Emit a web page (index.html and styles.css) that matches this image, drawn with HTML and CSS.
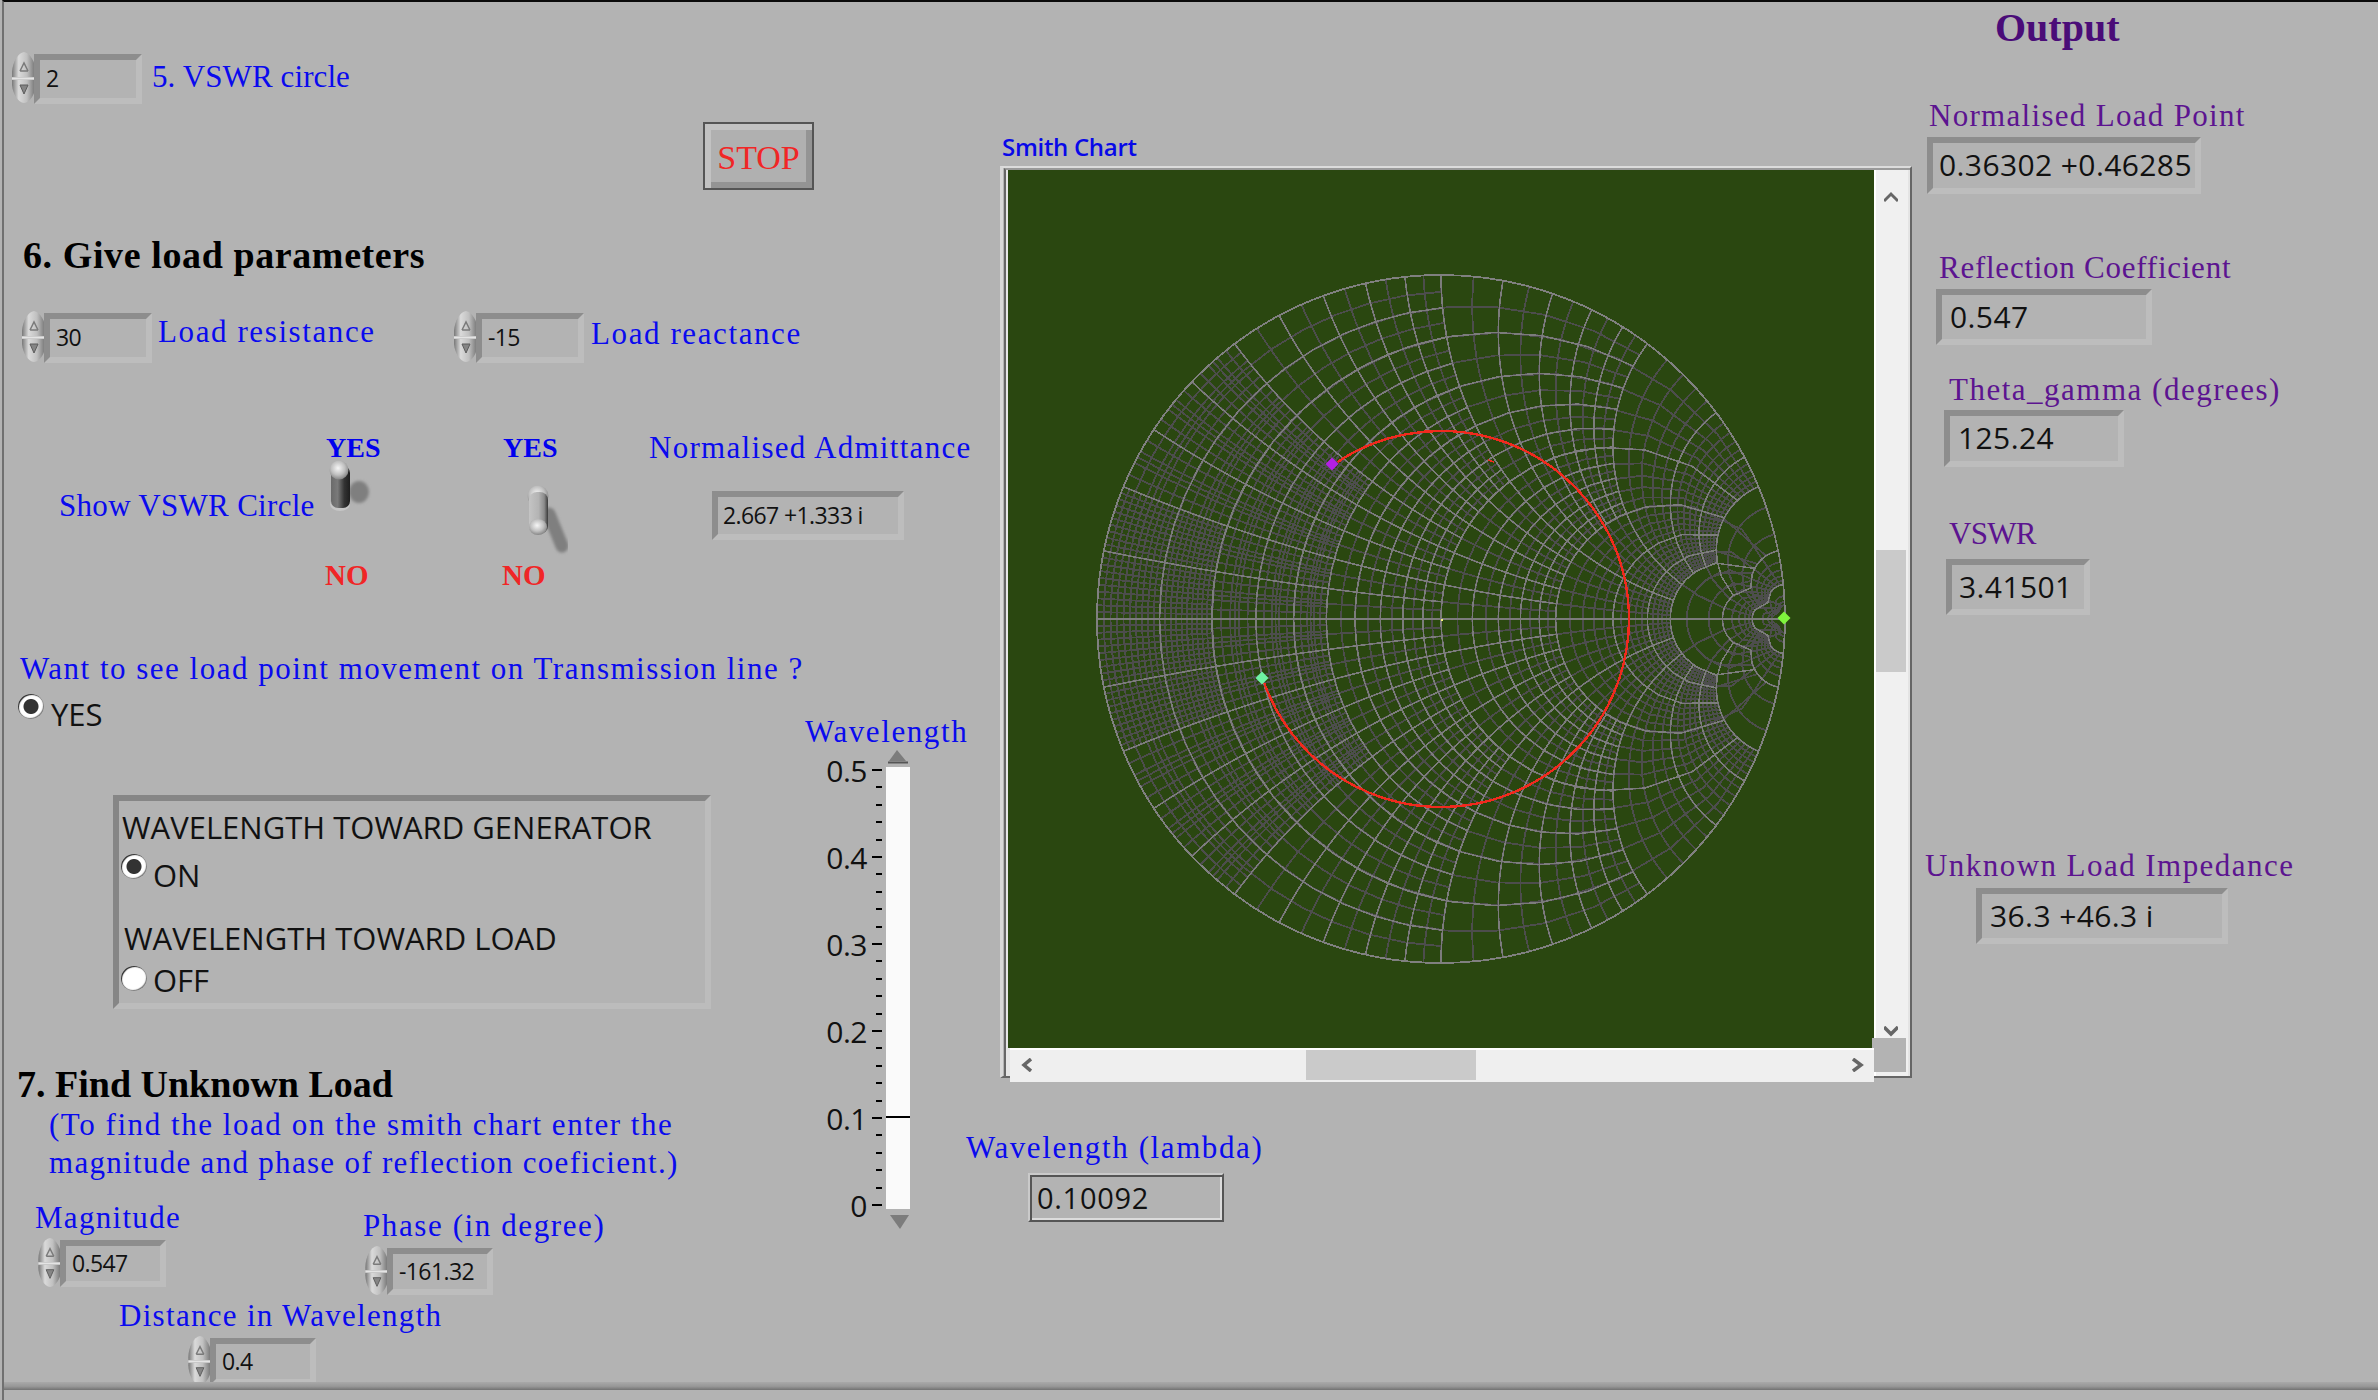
FILE: index.html
```html
<!DOCTYPE html>
<html lang="en">
<head>
<meta charset="utf-8">
<title>Smith Chart</title>
<link rel="stylesheet" href="styles.css">
</head>
<body>
<svg class="defs" width="0" height="0" aria-hidden="true">
  <defs>
    <linearGradient id="spinFill" x1="0" x2="1" y1="0" y2="0">
      <stop offset="0" stop-color="#777"/><stop offset=".28" stop-color="#dadada"/><stop offset=".62" stop-color="#c0c0c0"/><stop offset="1" stop-color="#6c6c6c"/>
    </linearGradient>
    <linearGradient id="leverDark" x1="0" x2="1" y1="0" y2="0">
      <stop offset="0" stop-color="#6a6a6a"/><stop offset=".35" stop-color="#7a7a7a"/><stop offset=".7" stop-color="#333"/><stop offset="1" stop-color="#1e1e1e"/>
    </linearGradient>
    <linearGradient id="leverLight" x1="0" x2="1" y1="0" y2="0">
      <stop offset="0" stop-color="#c4c4c4"/><stop offset=".5" stop-color="#b4b4b4"/><stop offset=".8" stop-color="#8c8c8c"/><stop offset="1" stop-color="#3a3a3a"/>
    </linearGradient>
    <radialGradient id="ball" cx=".45" cy=".4" r=".6">
      <stop offset="0" stop-color="#f6f6f6"/><stop offset=".6" stop-color="#c0c0c0"/><stop offset="1" stop-color="#868686"/>
    </radialGradient>
    <filter id="soft" x="-40%" y="-40%" width="180%" height="180%"><feGaussianBlur stdDeviation="1.5"/></filter>
    <symbol id="spin" viewBox="0 0 24 51">
      <path d="M0 25C-1 13 5 1 12 0c7 1 13 13 12 25Z" fill="url(#spinFill)"/>
      <path d="M0 28c-1 11 5 22 12 23 7-1 13-12 12-23Z" fill="url(#spinFill)"/>
      <path d="M0 26.500h24" stroke="#e4e4e4" stroke-width="2"/>
      <path d="M8 19l4-8 4 8M8 19h8" fill="none" stroke="#7a7a7a" stroke-width="1.500"/>
      <path d="M8 33h8l-4 9Z" fill="#858585" stroke="#5c5c5c"/>
    </symbol>
  </defs>
</svg>

<main class="panel">
  <section class="col-left">
    <div class="row vswr-row">
      <div class="num"><svg class="spin"><use href="#spin"/></svg><output class="field w108">2</output></div>
      <span class="lbl vswr-lbl">5. VSWR circle</span>
    </div>

    <button class="stop" type="button">STOP</button>

    <h2 class="head head-six">6. Give load parameters</h2>

    <div class="load-row">
      <div class="row">
        <div class="num"><svg class="spin"><use href="#spin"/></svg><output class="field w108">30</output></div>
        <span class="lbl res-lbl">Load resistance</span>
      </div>
      <div class="row">
        <div class="num"><svg class="spin"><use href="#spin"/></svg><output class="field w108">-15</output></div>
        <span class="lbl rea-lbl">Load reactance</span>
      </div>
    </div>

    <div class="toggle-row">
      <div class="show-cell"><span class="lbl show-lbl">Show VSWR Circle</span></div>
      <div class="toggle-cell">
        <span class="yes">YES</span>
        <svg class="toggle" viewBox="0 0 70 102" width="70" height="102">
          <ellipse cx="34" cy="36" rx="10" ry="11" fill="#7f7f7f" filter="url(#soft)"/>
          <ellipse cx="15" cy="48" rx="10" ry="7" fill="#c6c6c6"/>
          <rect x="6" y="10" width="19" height="42" rx="7" fill="url(#leverDark)"/>
          <circle cx="14" cy="14" r="9.500" fill="url(#ball)"/>
        </svg>
        <span class="no">NO</span>
      </div>
      <div class="toggle-cell">
        <span class="yes">YES</span>
        <svg class="toggle" viewBox="0 0 70 102" width="70" height="102">
          <path d="M47 58L60 90" stroke="#7f7f7f" stroke-width="13" stroke-linecap="round" filter="url(#soft)"/>
          <circle cx="36" cy="40" r="10.500" fill="url(#ball)"/>
          <rect x="27" y="36" width="19" height="42" rx="8" fill="url(#leverLight)"/>
          <ellipse cx="36" cy="71" rx="9" ry="8" fill="url(#ball)"/>
        </svg>
        <span class="no">NO</span>
      </div>
      <div class="admit-cell">
        <span class="lbl admit-lbl">Normalised Admittance</span>
        <output class="field admit">2.667 +1.333 i</output>
      </div>
    </div>

    <p class="lbl want">Want to see load point movement on Transmission line ?</p>

    <div class="lower">
      <div class="lower-main">
        <div class="row radio-yes">
          <span class="radio on"></span><span class="opt opt-yes">YES</span>
        </div>

        <div class="wave-box">
          <div class="opt box-gen">WAVELENGTH TOWARD GENERATOR</div>
          <div class="row radio-on"><span class="radio on"></span><span class="opt opt-on">ON</span></div>
          <div class="opt box-load">WAVELENGTH TOWARD LOAD</div>
          <div class="row radio-off"><span class="radio"></span><span class="opt opt-off">OFF</span></div>
        </div>

        <h2 class="head head-seven">7. Find Unknown Load</h2>
        <p class="lbl note"><span class="note-a">(To find the load on the smith chart enter the</span><br><span class="note-b">magnitude and phase of reflection coeficient.)</span></p>

        <div class="mag-row">
          <div>
            <div class="lbl tight">Magnitude</div>
            <div class="num small mag-num"><svg class="spin"><use href="#spin"/></svg><output class="field w106">0.547</output></div>
          </div>
          <div class="phase-cell">
            <div class="lbl">Phase (in degree)</div>
            <div class="num small phase-num"><svg class="spin"><use href="#spin"/></svg><output class="field w106">-161.32</output></div>
          </div>
        </div>

        <div class="lbl tight dist-lbl">Distance in Wavelength</div>
        <div class="num small dist-num"><svg class="spin"><use href="#spin"/></svg><output class="field w106">0.4</output></div>
      </div>

      <div class="slider-col">
        <div class="lbl slider-lbl">Wavelength</div>
        <div class="slider">
          <div class="scale">
            <div class="mark"><span>0.5</span><b></b></div>
            <div class="mark"><span>0.4</span><b></b></div>
            <div class="mark"><span>0.3</span><b></b></div>
            <div class="mark"><span>0.2</span><b></b></div>
            <div class="mark"><span>0.1</span><b></b></div>
            <div class="mark"><span>0</span><b></b></div>
          </div>
          <div class="minor"></div>
          <div class="track-col">
            <svg class="arrow-up" width="24" height="17" viewBox="0 0 24 17"><path d="M11 0L20 11H3Z" fill="#7c7c7c"/><path d="M2 12.500h20" stroke="#555" stroke-width="2"/></svg>
            <div class="track"><i class="needle" style="bottom:20.500%"></i></div>
            <svg class="arrow-down" width="24" height="20" viewBox="0 0 24 20"><path d="M4 6H23L14 20Z" fill="#7c7c7c"/></svg>
          </div>
        </div>
      </div>
    </div>
  </section>

  <section class="col-chart">
    <div class="chart-title">Smith Chart</div>
    <div class="frame">
      <div class="frame-in">
        <svg id="smith" class="plot" width="866" height="878" viewBox="0 0 866 878" role="img" aria-label="Smith chart"></svg>
        <div class="vbar">
          <svg class="sb-up" width="14" height="14" viewBox="0 0 14 14"><path d="M0 10L7 3l7 7" fill="none" stroke="#666" stroke-width="3"/></svg>
          <div class="vthumb"></div>
          <svg class="sb-down" width="14" height="12" viewBox="0 0 14 12"><path d="M0 1l7 7 7-7" fill="none" stroke="#666" stroke-width="3.500"/></svg>
          <div class="corner"></div>
        </div>
        <div class="hbar">
          <svg class="sb-left" width="11" height="14" viewBox="0 0 11 14"><path d="M10 1L3 7l7 6" fill="none" stroke="#666" stroke-width="3.500"/></svg>
          <div class="hthumb"></div>
          <svg class="sb-right" width="12" height="14" viewBox="0 0 12 14"><path d="M1 1l8 6-8 6" fill="none" stroke="#666" stroke-width="3.500"/></svg>
        </div>
      </div>
    </div>
    <div class="lbl lambda-lbl">Wavelength (lambda)</div>
    <output class="lambda">0.10092</output>
  </section>

  <section class="col-out">
    <h1 class="out-title">Output</h1>
    <div class="plbl p-nlp">Normalised Load Point</div>
    <output class="ofield o-nlp">0.36302 +0.46285</output>
    <div class="plbl p-ref">Reflection Coefficient</div>
    <output class="ofield o-ref">0.547</output>
    <div class="plbl p-theta">Theta_gamma (degrees)</div>
    <output class="ofield o-theta">125.24</output>
    <div class="plbl p-vswr">VSWR</div>
    <output class="ofield o-vswr">3.41501</output>
    <div class="plbl p-unk">Unknown Load Impedance</div>
    <output class="ofield o-unk">36.3 +46.3 i</output>
  </section>

  <div class="bottom-line"></div>
</main>
<script src="app.js"></script>
</body>
</html>
```
FILE: styles.css
```css
html, body { margin: 0; padding: 0; background: #b3b3b3; overflow: hidden; }
body { width: 2378px; height: 1400px; }
.defs { position: absolute; }

.panel {
  box-sizing: border-box;
  margin-left: 2px;
  width: 2376px;
  height: 1400px;
  border-top: 2px solid #0a0a0a;
  border-left: 2px solid #707070;
  background: #b3b3b3;
  display: grid;
  grid-template-columns: 956px 952px 466px;
  grid-template-rows: 1380px 8px;
}
.bottom-line { grid-column: 1 / -1; background: linear-gradient(#a9a9a9, #979797 55%, #727272); }
.col-left, .col-chart, .col-out { min-width: 0; }

.row { display: flex; align-items: flex-start; }

.lbl {
  display: block;
  margin: 0;
  font: 31px/36px "Liberation Serif", serif;
  letter-spacing: 1.600px;
  color: #0a0aee;
  white-space: nowrap;
}
.tight { letter-spacing: 1.300px; }
.head {
  margin: 0;
  font: bold 38px/44px "Liberation Serif", serif;
  color: #000;
  white-space: nowrap;
}
.opt {
  font: 31px/34px "Open Sans", sans-serif;
  color: #111;
  white-space: nowrap;
}

/* numeric controls */
.num { display: flex; align-items: flex-start; }
.spin { width: 24px; height: 51px; flex: none; }
.field {
  box-sizing: border-box;
  display: flex;
  align-items: center;
  height: 50px;
  margin: 2px 0 0 -2px;
  padding: 0 0 2px 6px;
  border: 6px solid;
  border-color: #8d8d8d #bdbdbd #bdbdbd #8d8d8d;
  font: 23px "Open Sans", sans-serif;
  letter-spacing: -.600px;
  color: #111;
  white-space: nowrap;
}
.w108 { width: 108px; }
.w106 { width: 106px; }
.small .spin { height: 49px; }
.small .field { height: 47px; }

/* section 5 */
.vswr-row { margin: 50px 0 0 8px; }
.vswr-lbl { margin: 7px 0 0 10px; letter-spacing: .100px; }

.stop {
  display: block;
  box-sizing: border-box;
  width: 111px;
  height: 68px;
  margin: 18px 0 0 699px;
  padding: 4px 0 0;
  border: 2px solid #555;
  background: #b0b0b0;
  box-shadow: inset 7px 7px 0 -1px #c2c2c2, inset -7px -7px 0 -1px #949494;
  font: 34px "Liberation Serif", serif;
  color: #f02626;
}

/* section 6 */
.head-six { margin: 43px 0 0 19px; letter-spacing: .600px; }
.load-row {
  display: grid;
  grid-template-columns: 432px auto;
  justify-content: start;
  margin: 34px 0 0 18px;
}
.res-lbl { margin: 3px 0 0 6px; }
.rea-lbl { margin: 5px 0 0 7px; }

.toggle-row {
  display: grid;
  grid-template-columns: 321px 177px 147px auto;
  justify-content: start;
  margin-top: 68px;
}
.show-cell { padding: 57px 0 0 55px; }
.show-lbl { letter-spacing: .300px; }
.toggle-cell { display: flex; flex-direction: column; align-items: flex-start; }
.yes, .no { font: bold 29px/34px "Liberation Serif", serif; white-space: nowrap; }
.yes { color: #0000ee; font-size: 28px; margin-left: 1px; }
.no { color: #f02626; }
.toggle { display: block; margin-top: -9px; }
.admit-cell { margin-top: -1px; }
.admit-lbl { letter-spacing: 1.300px; }
.admit { width: 192px; height: 49px; margin: 25px 0 0 63px; padding-left: 5px; }

.want { margin: 59px 0 0 16px; letter-spacing: 1.500px; }

.lower { display: grid; grid-template-columns: 801px auto; }

/* radios */
.radio {
  box-sizing: border-box;
  flex: none;
  width: 26px;
  height: 25px;
  border-radius: 50%;
  background: #fff;
  box-shadow: inset 1px 1px 1px #222, inset -1px -1px 1px #777;
}
.radio.on { background: radial-gradient(circle, #333 0 7px, #fff 8px); }
.radio-yes { margin: 7px 0 0 14px; }
.opt-yes { margin: 3px 0 0 7px; }

.wave-box {
  box-sizing: border-box;
  width: 598px;
  height: 214px;
  margin: 64px 0 0 109px;
  border: 6px solid;
  border-color: #868686 #bcbcbc #bcbcbc #868686;
}
.box-gen { margin: 9px 0 0 3px; }
.radio-on { margin: 10px 0 0 2px; }
.opt-on { margin: 4px 0 0 6px; }
.box-load { margin: 29px 0 0 5px; }
.radio-off { margin: 11px 0 0 2px; }
.opt-off { margin: -3px 0 0 6px; }

/* section 7 */
.head-seven { margin: 53px 0 0 13px; }
.note { margin: 0 0 0 45px; line-height: 38px; }
.note-a { letter-spacing: 1.550px; }
.note-b { letter-spacing: 1.300px; }
.mag-row {
  display: grid;
  grid-template-columns: 328px auto;
  justify-content: start;
  margin: 18px 0 0 31px;
}
.phase-cell { padding-top: 8px; }
.mag-num { margin: 2px 0 0 3px; }
.phase-num { margin: 2px 0 0 2px; }
.dist-lbl { margin: 3px 0 0 115px; }
.dist-num { margin: 2px 0 0 184px; }

/* slider */
.slider-lbl { margin-top: 27px; }
.slider {
  display: grid;
  grid-template-columns: 71px 6px 28px;
}
.scale {
  display: flex;
  flex-direction: column;
  justify-content: space-between;
  height: 437px;
  margin-top: 19px;
}
.mark { display: flex; justify-content: flex-end; align-items: center; gap: 5px; height: 2px; }
.mark span { font: 30px "Open Sans", sans-serif; letter-spacing: -.500px; color: #111; }
.mark b { width: 4px; height: 2px; background: #000; }
.minor {
  height: 437px;
  margin-top: 19px;
  background: repeating-linear-gradient(to bottom, #000 0 2px, transparent 2px 17.400px);
}
.track-col { display: flex; flex-direction: column; margin-left: 4px; }
.track { position: relative; width: 24px; height: 442px; background: #fafafa; flex: none; }
.needle { position: absolute; left: 0; right: 0; height: 2px; background: #000; }

/* chart */
.chart-title {
  margin: 131px 0 0 42px;
  font: 600 24px/28px "Open Sans", sans-serif;
  letter-spacing: -.300px;
  color: #0808e8;
  white-space: nowrap;
}
.frame {
  box-sizing: border-box;
  width: 912px;
  height: 912px;
  margin: 5px 0 0 40px;
  border-style: solid;
  border-width: 2px 2px 2px 3px;
  border-color: #dcdcdc #666 #666 #d8d8d8;
}
.frame-in {
  box-sizing: border-box;
  height: 100%;
  margin-left: 1px;
  padding-left: 2px;
  border-left: 2px solid #666;
  border-top: 2px solid #9a9a9a;
  background: #e6e6e6;
  display: grid;
  grid-template-columns: 866px 36px;
  grid-template-rows: 878px 28px;
}
.plot { display: block; background: #2a4710; }
.vbar {
  grid-row: 1 / 3;
  grid-column: 2;
  box-sizing: border-box;
  display: flex;
  flex-direction: column;
  padding-top: 21px;
  border-left: 2px solid #fff;
  background: #f0f0f0;
  border-right: 2px solid #e4e4e4;
}
.sb-up { margin-left: 8px; }
.vthumb { width: 30px; height: 122px; margin-top: 345px; background: #cacaca; flex: none; }
.sb-down { margin: 354px 0 0 8px; flex: none; }
.corner { width: 34px; height: 34px; margin-left: -4px; background: #b3b3b3; flex: none; }
.hbar {
  grid-row: 2;
  grid-column: 1;
  box-sizing: border-box;
  display: flex;
  align-items: flex-start;
  height: 34px;
  margin-left: 2px;
  border-top: 2px solid #fff;
  background: #efefef;
}
.sb-left { margin: 8px 0 0 11px; flex: none; }
.hthumb { width: 170px; height: 30px; margin-left: 274px; background: #cacaca; flex: none; }
.sb-right { margin: 8px 0 0 376px; flex: none; }

.lambda-lbl { margin: 52px 0 0 6px; }
.lambda {
  box-sizing: border-box;
  display: flex;
  align-items: center;
  width: 196px;
  height: 49px;
  margin: 7px 0 0 68px;
  padding-left: 7px;
  border: 2px solid;
  border-color: #cacaca #555 #555 #cacaca;
  box-shadow: inset 2px 2px 0 #555, inset -2px -2px 0 #dcdcdc;
  font: 29px "Open Sans", sans-serif;
  letter-spacing: .700px;
  color: #111;
}

/* output */
.out-title {
  margin: 3px 0 0 83px;
  font: bold 40px/46px "Liberation Serif", serif;
  color: #4a0c78;
  white-space: nowrap;
}
.plbl {
  font: 31px/36px "Liberation Serif", serif;
  letter-spacing: 1.300px;
  color: #5c1490;
  white-space: nowrap;
}
.ofield {
  box-sizing: border-box;
  display: flex;
  align-items: center;
  height: 57px;
  padding-bottom: 2px;
  border: 6px solid;
  border-color: #8d8d8d #bdbdbd #bdbdbd #8d8d8d;
  font: 30px "Open Sans", sans-serif;
  letter-spacing: .400px;
  color: #111;
  white-space: nowrap;
}
.p-nlp { margin: 47px 0 0 17px; }
.o-nlp { width: 274px; margin: 3px 0 0 15px; padding-left: 6px; }
.p-ref { margin: 56px 0 0 27px; letter-spacing: .750px; }
.o-ref { width: 216px; height: 56px; margin: 3px 0 0 24px; padding-left: 8px; }
.p-theta { margin: 27px 0 0 37px; letter-spacing: 1.500px; }
.o-theta { width: 180px; margin: 2px 0 0 32px; padding-left: 8px; }
.p-vswr { margin: 49px 0 0 37px; letter-spacing: -.700px; }
.o-vswr { width: 144px; height: 56px; margin: 7px 0 0 34px; padding-left: 7px; }
.p-unk { margin: 233px 0 0 13px; letter-spacing: 1.450px; }
.o-unk { width: 252px; height: 56px; margin: 4px 0 0 64px; padding-left: 8px; }
```
FILE: app.js
```js
(function () {
  var NS = "http://www.w3.org/2000/svg";
  var svg = document.getElementById("smith");
  var CX = 433, CY = 449, R = 344;
  var OX = 1008, OY = 170;

  function gamma(r, x) {
    var d = (r + 1) * (r + 1) + x * x;
    return [CX + R * (r * r + x * x - 1) / d, CY - R * 2 * x / d];
  }
  function poly(fn, a, b) {
    var ta = Math.atan(a), tb = Math.atan(b), s = "", N = 28;
    for (var i = 0; i <= N; i++) {
      var p = fn(Math.tan(ta + (tb - ta) * i / N));
      s += (i ? "L" : "M") + p[0].toFixed(1) + " " + p[1].toFixed(1);
    }
    return s;
  }
  function rArc(r, xmax) {
    return poly(function (x) { return gamma(r, x); }, -xmax, xmax);
  }
  function xArc(x, rmax) {
    return poly(function (r) { return gamma(r, x); }, 0, rmax) +
           poly(function (r) { return gamma(r, -x); }, 0, rmax);
  }
  function add(d, color, width) {
    var p = document.createElementNS(NS, "path");
    p.setAttribute("d", d);
    p.setAttribute("fill", "none");
    p.setAttribute("stroke", color);
    p.setAttribute("stroke-width", width);
    p.setAttribute("shape-rendering", "crispEdges");
    svg.appendChild(p);
  }
  // A level draws every multiple of step up to limit, in both families,
  // and each arc stops at limit of the other family.
  function grid(levels) {
    var d = "";
    levels.forEach(function (l) {
      var n = Math.round(l[0] / l[1]);
      for (var i = 1; i <= n; i++) {
        var v = +(i * l[1]).toFixed(4);
        d += rArc(v, l[0]) + xArc(v, l[0]);
      }
    });
    return d;
  }

  add(grid([[0.2, 0.01], [0.5, 0.02], [1, 0.05], [2, 0.1], [5, 0.2], [10, 2], [20, 2], [50, 10]]), "#4d4d4d", 1.8);
  add(grid([[1, 0.1], [2, 0.2], [5, 1], [10, 5], [20, 20]]) +
      "M" + (CX - R) + " " + CY + "H" + (CX + R), "#7c7c7c", 1.5);

  var rim = document.createElementNS(NS, "circle");
  rim.setAttribute("cx", CX);
  rim.setAttribute("cy", CY);
  rim.setAttribute("r", R);
  rim.setAttribute("fill", "none");
  rim.setAttribute("stroke", "#808080");
  rim.setAttribute("stroke-width", 1.8);
  rim.setAttribute("shape-rendering", "crispEdges");
  svg.appendChild(rim);

  // VSWR circle from the purple marker clockwise to the green marker
  var RV = 188;
  function onCircle(px, py, shift) {
    var a = Math.atan2(py - OY - CY, px - OX - CX) + shift;
    return (CX + RV * Math.cos(a)).toFixed(1) + " " + (CY + RV * Math.sin(a)).toFixed(1);
  }
  add("M" + onCircle(1332, 464, 0.03) + "A" + RV + " " + RV + " 0 1 1 " + onCircle(1262, 678, -0.03), "#f02a1e", 2.4);
  add("M" + (1488 - OX) + " " + (460 - OY) + "l6 2", "#f02a1e", 1.5);

  function diamond(x, y, c) {
    var p = document.createElementNS(NS, "path");
    p.setAttribute("d", "M" + (x - OX) + " " + (y - OY - 6.5) + "l6.5 6.5 -6.5 6.5 -6.5 -6.5Z");
    p.setAttribute("fill", c);
    svg.appendChild(p);
  }
  diamond(1332, 464, "#b41fe6");
  diamond(1262, 678, "#6ff2a2");
  diamond(1784, 618, "#7ff53c");

  var dot = document.createElementNS(NS, "rect");
  dot.setAttribute("x", CX);
  dot.setAttribute("y", CY);
  dot.setAttribute("width", 2);
  dot.setAttribute("height", 2);
  dot.setAttribute("fill", "#f5f57a");
  svg.appendChild(dot);
})();
```
